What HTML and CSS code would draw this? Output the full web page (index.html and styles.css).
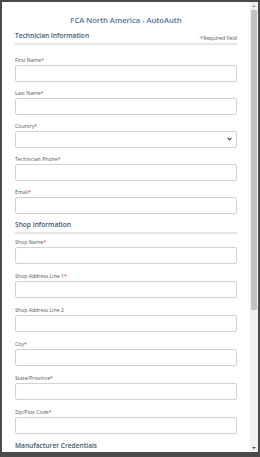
FILE: index.html
```html
<!DOCTYPE html>
<html lang="en">
<head>
    <meta charset="UTF-8">
    <meta name="viewport" content="width=device-width, initial-scale=1.0">
    <title>FCA North America - AutoAuth</title>
    <link rel="stylesheet" href="styles.css">
</head>
<body>
    <div class="modal">
        <div class="modal-body">
            <h1 class="title">FCA North America - AutoAuth</h1>

            <!-- Technician -->
            <div class="section tech">
                <div class="section-head first">
                    <h2>Technician Information</h2>
                    <span class="required-note"><span class="star">*</span>Required field</span>
                </div>
                <div class="field">
                    <label>First Name<span class="star">*</span></label>
                    <input type="text">
                </div>
                <div class="field">
                    <label>Last Name<span class="star">*</span></label>
                    <input type="text">
                </div>
                <div class="field">
                    <label>Country<span class="star">*</span></label>
                    <div class="select-box">
                        <select></select>
                        <svg width="5" height="4" viewBox="0 0 5 4"><path d="M0.6 0.8 L2.5 2.8 L4.4 0.8" fill="none" stroke="#333" stroke-width="1.1"/></svg>
                    </div>
                </div>
                <div class="field">
                    <label>Technician Phone<span class="star">*</span></label>
                    <input type="text">
                </div>
                <div class="field">
                    <label>Email<span class="star">*</span></label>
                    <input type="text">
                </div>
            </div>

            <!-- Shop -->
            <div class="section shop">
                <div class="section-head">
                    <h2>Shop Information</h2>
                </div>
                <div class="field">
                    <label>Shop Name<span class="star">*</span></label>
                    <input type="text">
                </div>
                <div class="field">
                    <label>Shop Address Line 1<span class="star">*</span></label>
                    <input type="text">
                </div>
                <div class="field">
                    <label>Shop Address Line 2</label>
                    <input type="text">
                </div>
                <div class="field">
                    <label>City<span class="star">*</span></label>
                    <input type="text">
                </div>
                <div class="field">
                    <label>State/Province<span class="star">*</span></label>
                    <input type="text">
                </div>
                <div class="field">
                    <label>Zip/Post Code<span class="star">*</span></label>
                    <input type="text">
                </div>
            </div>

            <div class="section">
                <div class="section-head">
                    <h2>Manufacturer Credentials</h2>
                </div>
            </div>
        </div>

        <!-- scrollbar -->
        <div class="scrollbar">
            <div class="arrow up"></div>
            <div class="thumb"></div>
            <div class="arrow down"></div>
        </div>
    </div>
</body>
</html>
```

FILE: styles.css
```css
* {
    margin: 0;
    padding: 0;
    box-sizing: border-box;
}
body {
    background: #4b4b4b;
    font-family: 'Open Sans', 'Noto Sans', sans-serif;
    height: 457px;
    overflow: hidden;
    padding: 2px 2px 0 2px;
}
.modal {
    background: white;
    height: 450px;
    display: flex;
    overflow: hidden;
}
.modal-body {
    flex: 1;
    padding: 13px 13px 0 13px;
    overflow: hidden;
}
.title {
    font-size: 7.6px;
    font-weight: 600;
    line-height: 10px;
    color: #51709c;
    text-align: center;
}
.section-head {
    display: flex;
    justify-content: space-between;
    align-items: flex-end;
    border-bottom: 2px solid #e6e6e6;
    padding-bottom: 2.5px;
    margin-top: -1px;
    margin-bottom: 4.5px;
}
.section-head.first {
    margin-top: 6px;
    padding-bottom: 3px;
    margin-bottom: 11px;
}
.section-head h2 {
    font-size: 6.6px;
    font-weight: 600;
    line-height: 9px;
    color: #41556f;
}
.required-note {
    font-size: 5.2px;
    color: #555;
    line-height: 7px;
    margin-bottom: -2px;
}
.star {
    color: #d0312d;
}
.field {
    margin-bottom: 7.5px;
}
.shop .field {
    margin-bottom: 8.5px;
}
.field label {
    display: block;
    font-size: 5.2px;
    line-height: 8px;
    color: #555;
    margin-bottom: 1px;
}
.field input,
.select-box {
    display: block;
    width: 100%;
    height: 16.5px;
    border: 1px solid #d2d2d2;
    border-radius: 2px;
    background: white;
    outline: none;
}
.select-box {
    display: flex;
    align-items: center;
    padding-right: 4px;
}
.select-box select {
    flex: 1;
    height: 100%;
    border: none;
    background: transparent;
    appearance: none;
    outline: none;
}
.scrollbar {
    width: 8px;
    background: #f1f1f1;
    display: flex;
    flex-direction: column;
    align-items: center;
}
.arrow {
    width: 0;
    height: 0;
    border-left: 2.5px solid transparent;
    border-right: 2.5px solid transparent;
    margin: 3px 0;
}
.arrow.up {
    border-bottom: 2.5px solid #a3a3a3;
}
.arrow.down {
    border-top: 2.5px solid #505050;
    margin-top: auto;
}
.thumb {
    width: 6px;
    height: 300px;
    background: #c1c1c1;
}
```
